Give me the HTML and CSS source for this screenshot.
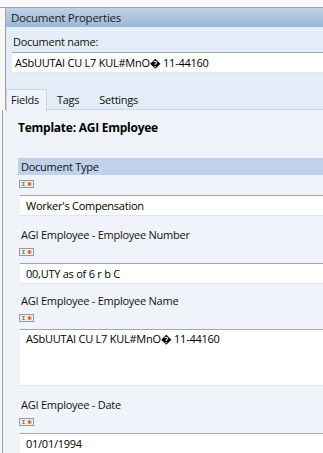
FILE: index.html
```html
<!DOCTYPE html>
<html lang="en">
<head>
  <meta charset="UTF-8">
  <title>Document Properties</title>
  <link rel="stylesheet" href="styles.css">
</head>
<body>
  <div class="topbar"></div>

  <div class="props">
    <div class="props-title">Document Properties</div>
    <div class="props-body">
      <div class="label">Document name:</div>
      <div class="field name-field">ASbUUTAI CU L7 KUL#MnO&#xFFFD; 11-44160</div>
      <div class="tabs">
        <div class="tab active">Fields</div>
        <div class="tab">Tags</div>
        <div class="tab">Settings</div>
      </div>
    </div>
  </div>

  <div class="fields">
    <div class="template">Template: AGI Employee</div>

    <div class="section">Document Type</div>
    <div class="flag"><svg width="15" height="8" viewBox="0 0 15 8"><rect x="0.5" y="0.5" width="14" height="7" fill="#eeeeee" stroke="#9a9a9a"/><path d="M3 2.5h3M4.5 2.5v3M3 5.5h3" stroke="#8c8c8c" fill="none"/><path d="M10.5 2v4M8.5 4h4M9 2.5l3 3M12 2.5l-3 3" stroke="#e2552a" fill="none"/></svg></div>
    <div class="field">Worker's Compensation</div>

    <div class="caption">AGI Employee - Employee Number</div>
    <div class="flag"><svg width="15" height="8" viewBox="0 0 15 8"><rect x="0.5" y="0.5" width="14" height="7" fill="#eeeeee" stroke="#9a9a9a"/><path d="M3 2.5h3M4.5 2.5v3M3 5.5h3" stroke="#8c8c8c" fill="none"/><path d="M10.5 2v4M8.5 4h4M9 2.5l3 3M12 2.5l-3 3" stroke="#e2552a" fill="none"/></svg></div>
    <div class="field">00,UTY as of 6 r b C</div>

    <div class="caption near">AGI Employee - Employee Name</div>
    <div class="flag"><svg width="15" height="8" viewBox="0 0 15 8"><rect x="0.5" y="0.5" width="14" height="7" fill="#eeeeee" stroke="#9a9a9a"/><path d="M3 2.5h3M4.5 2.5v3M3 5.5h3" stroke="#8c8c8c" fill="none"/><path d="M10.5 2v4M8.5 4h4M9 2.5l3 3M12 2.5l-3 3" stroke="#e2552a" fill="none"/></svg></div>
    <div class="field memo">ASbUUTAI CU L7 KUL#MnO&#xFFFD; 11-44160</div>

    <div class="caption">AGI Employee - Date</div>
    <div class="flag"><svg width="15" height="8" viewBox="0 0 15 8"><rect x="0.5" y="0.5" width="14" height="7" fill="#eeeeee" stroke="#9a9a9a"/><path d="M3 2.5h3M4.5 2.5v3M3 5.5h3" stroke="#8c8c8c" fill="none"/><path d="M10.5 2v4M8.5 4h4M9 2.5l3 3M12 2.5l-3 3" stroke="#e2552a" fill="none"/></svg></div>
    <div class="field">01/01/1994</div>
  </div>
</body>
</html>
```

FILE: styles.css
```css
body {
  margin: 0;
  background-color: #f7f7f7;
  font-family: "Segoe UI", "Open Sans", "Liberation Sans", sans-serif;
  font-size: 11px;
  letter-spacing: -0.25px;
  color: #111;
  overflow: hidden;
}
.topbar {
  height: 7px;
  border-bottom: 1px solid #a3a3a3;
}
.props {
  margin-left: 5px;
  border-left: 1px solid #a0a0a0;
  background-color: #e4edf7;
}
.props-title {
  height: 19px;
  line-height: 19px;
  padding-left: 5px;
  background: linear-gradient(#bfd2e7, #9bb7d7);
  color: #1b1b1b;
  font-size: 11.5px;
}
.props-body {
  padding: 8px 0 0 0;
}
.label {
  padding-left: 7px;
  line-height: 14px;
}
.field {
  background-color: white;
  border-top: 1px solid #a6a6a6;
  border-bottom: 1px solid #dfe5ec;
  height: 19px;
  line-height: 19px;
  padding-left: 6px;
  white-space: nowrap;
  color: #000;
}
.name-field {
  margin: 3px 0 0 6px;
  padding-left: 3px;
}
.tabs {
  display: flex;
  margin-top: 16px;
  height: 20px;
  border-bottom: 1px solid #c7d5e6;
}
.tab {
  padding: 0 8px;
  line-height: 21px;
  margin-right: 2px;
}
.tab.active {
  background-color: #f0f4fa;
  border: 1px solid #c7d5e6;
  border-bottom: none;
  padding: 0 7px 0 4px;
  height: 21px;
  line-height: 20px;
}
.tab + .tab {
  padding: 0 10px 0 8px;
}
.fields {
  margin-left: 2px;
  border-left: 1px solid #a0a0a0;
  background-color: #f0f4fa;
  padding: 11px 0 0 15px;
  height: 332px;
}
.template {
  font-weight: bold;
  font-size: 12px;
  line-height: 14px;
  color: #000;
}
.section {
  margin-top: 23px;
  height: 17px;
  line-height: 17px;
  padding-left: 3px;
  background-color: #bfd2ea;
}
.flag {
  margin: 5px 0 0 1px;
  height: 8px;
  line-height: 0;
}
.flag + .field {
  margin: 7px 0 0 2px;
}
.caption {
  margin-top: 12px;
  padding-left: 3px;
  line-height: 14px;
}
.caption.near {
  margin-top: 10px;
}
.caption + .flag {
  margin-top: 6px;
}
.field.memo {
  height: 55px;
  line-height: 18px;
}
```
